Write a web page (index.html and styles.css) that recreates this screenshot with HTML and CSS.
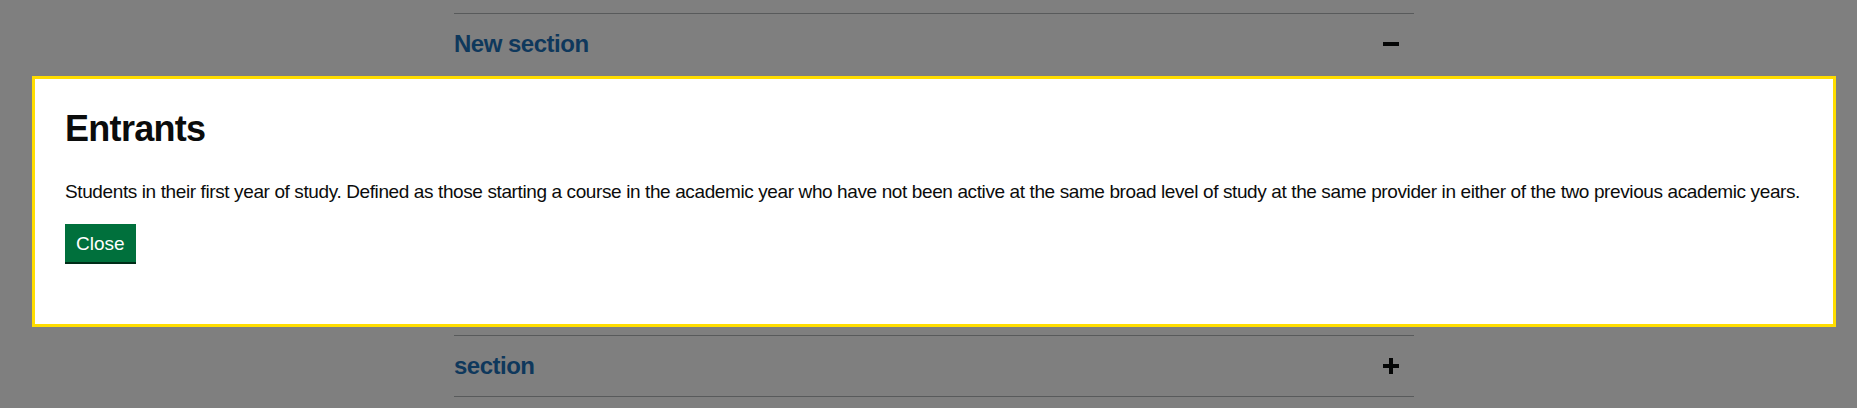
FILE: index.html
```html
<!DOCTYPE html>
<html lang="en">
<head>
<meta charset="utf-8">
<title>Entrants</title>
<link rel="stylesheet" href="styles.css">
</head>
<body>
<div class="page">
  <div class="accordion">
    <div class="section">
      <div class="section-header">
        <span class="section-title">New section</span>
        <span class="icon icon-minus"></span>
      </div>
      <div class="section-content"></div>
    </div>
    <div class="section">
      <div class="section-header">
        <span class="section-title">section</span>
        <span class="icon icon-plus"></span>
      </div>
    </div>
  </div>
</div>
<div class="overlay"></div>
<div class="modal" role="dialog">
  <h2 class="modal-title">Entrants</h2>
  <p class="modal-body">Students in their first year of study. Defined as those starting a course in the academic year who have not been active at the same broad level of study at the same provider in either of the two previous academic years.</p>
  <button class="button" type="button">Close</button>
</div>
</body>
</html>
```

FILE: styles.css
```css
* { box-sizing: border-box; }
html, body { margin: 0; padding: 0; }
body {
  background: #ffffff;
  font-family: "Liberation Sans", Arial, sans-serif;
  color: #0b0c0c;
  height: 408px;
  overflow: hidden;
}
.page {
  padding-top: 13px;
}
.accordion {
  width: 960px;
  margin-left: 454px;
}
.section {
  border-top: 1px solid #b1b4b6;
}
.section:last-child {
  border-bottom: 1px solid #b1b4b6;
}
.section-header {
  display: flex;
  align-items: center;
  justify-content: space-between;
  padding: 15px 15px 15px 0;
}
.section-title {
  font-weight: 700;
  font-size: 24px;
  line-height: 30px;
  letter-spacing: -0.5px;
  color: #1d70b8;
}
.icon {
  position: relative;
  width: 16px;
  height: 16px;
}
.icon::before, .icon::after {
  content: "";
  position: absolute;
  background: #0b0c0c;
}
.icon::before {
  left: 0; top: 6px; width: 16px; height: 4px;
}
.icon-plus::after {
  left: 6px; top: 0; width: 4px; height: 16px;
}
.section-content {
  height: 261px;
}
.overlay {
  position: fixed;
  inset: 0;
  background: rgba(0, 0, 0, 0.5);
}
.modal {
  position: fixed;
  left: 32px;
  top: 76px;
  width: 1804px;
  height: 251px;
  background: #ffffff;
  border: 3px solid #ffdd00;
  padding: 30px;
}
.modal-title {
  margin: 0 0 30px;
  font-size: 36px;
  line-height: 40px;
  font-weight: 700;
  letter-spacing: -0.7px;
}
.modal-body {
  margin: 0 0 20px;
  font-size: 19px;
  line-height: 25px;
  letter-spacing: -0.39px;
  white-space: nowrap;
}
.button {
  font-family: "Liberation Sans", Arial, sans-serif;
  font-size: 19px;
  line-height: 19px;
  color: #ffffff;
  background: #00703c;
  border: 2px solid transparent;
  padding: 8px 9px 7px;
  margin: 0;
  box-shadow: 0 2px 0 #002d18;
  border-radius: 0;
  cursor: pointer;
}
```
